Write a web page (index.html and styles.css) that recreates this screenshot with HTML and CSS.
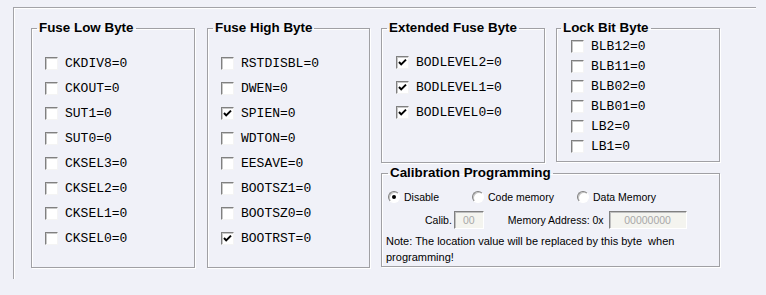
FILE: index.html
```html
<!DOCTYPE html>
<html>
<head>
<meta charset="utf-8">
<link rel="stylesheet" href="styles.css">
</head>
<body>
<div class="frame">
  <fieldset class="group tall w164">
    <legend>Fuse Low Byte</legend>
    <div class="list rows25 pt15">
      <label class="cb"><span class="box"></span>CKDIV8=0</label>
      <label class="cb"><span class="box"></span>CKOUT=0</label>
      <label class="cb"><span class="box"></span>SUT1=0</label>
      <label class="cb"><span class="box"></span>SUT0=0</label>
      <label class="cb"><span class="box"></span>CKSEL3=0</label>
      <label class="cb"><span class="box"></span>CKSEL2=0</label>
      <label class="cb"><span class="box"></span>CKSEL1=0</label>
      <label class="cb"><span class="box"></span>CKSEL0=0</label>
    </div>
  </fieldset>
  <fieldset class="group tall w163">
    <legend>Fuse High Byte</legend>
    <div class="list rows25 pt15">
      <label class="cb"><span class="box"></span>RSTDISBL=0</label>
      <label class="cb"><span class="box"></span>DWEN=0</label>
      <label class="cb"><span class="box checked"><svg viewBox="0 0 11 11" width="11" height="11"><path d="M2 5 L4.2 7.4 L9 2.6" fill="none" stroke="#000" stroke-width="2"/></svg></span>SPIEN=0</label>
      <label class="cb"><span class="box"></span>WDTON=0</label>
      <label class="cb"><span class="box"></span>EESAVE=0</label>
      <label class="cb"><span class="box"></span>BOOTSZ1=0</label>
      <label class="cb"><span class="box"></span>BOOTSZ0=0</label>
      <label class="cb"><span class="box checked"><svg viewBox="0 0 11 11" width="11" height="11"><path d="M2 5 L4.2 7.4 L9 2.6" fill="none" stroke="#000" stroke-width="2"/></svg></span>BOOTRST=0</label>
    </div>
  </fieldset>
  <div class="right">
    <div class="toprow">
      <fieldset class="group w164 h143">
        <legend>Extended Fuse Byte</legend>
        <div class="list rows25 pt14 pl14">
          <label class="cb"><span class="box checked"><svg viewBox="0 0 11 11" width="11" height="11"><path d="M2 5 L4.2 7.4 L9 2.6" fill="none" stroke="#000" stroke-width="2"/></svg></span>BODLEVEL2=0</label>
          <label class="cb"><span class="box checked"><svg viewBox="0 0 11 11" width="11" height="11"><path d="M2 5 L4.2 7.4 L9 2.6" fill="none" stroke="#000" stroke-width="2"/></svg></span>BODLEVEL1=0</label>
          <label class="cb"><span class="box checked"><svg viewBox="0 0 11 11" width="11" height="11"><path d="M2 5 L4.2 7.4 L9 2.6" fill="none" stroke="#000" stroke-width="2"/></svg></span>BODLEVEL0=0</label>
        </div>
      </fieldset>
      <fieldset class="group w164 h142">
        <legend class="lg-lock">Lock Bit Byte</legend>
        <div class="list rows20 pl14">
          <label class="cb"><span class="box"></span>BLB12=0</label>
          <label class="cb"><span class="box"></span>BLB11=0</label>
          <label class="cb"><span class="box"></span>BLB02=0</label>
          <label class="cb"><span class="box"></span>BLB01=0</label>
          <label class="cb"><span class="box"></span>LB2=0</label>
          <label class="cb"><span class="box"></span>LB1=0</label>
        </div>
      </fieldset>
    </div>
    <fieldset class="group cal">
      <legend class="lg-cal">Calibration Programming</legend>
      <div class="radios">
        <label class="rb r1"><span class="dot on"></span>Disable</label>
        <label class="rb r2"><span class="dot"></span>Code memory</label>
        <label class="rb"><span class="dot"></span>Data Memory</label>
      </div>
      <div class="fields">
        <span class="calib">Calib.</span>
        <input class="txt small" value="00" readonly>
        <span class="addr">Memory Address: 0x</span>
        <input class="txt wide" value="00000000" readonly>
      </div>
      <p class="note">Note: The location value will be replaced by this byte&nbsp; when programming!</p>
    </fieldset>
  </div>
</div>
</body>
</html>
```
FILE: styles.css
```css
html, body {
  margin: 0;
  padding: 0;
  background: #f0f1f8;
}
body {
  width: 766px;
  height: 295px;
  overflow: hidden;
  font-family: "Liberation Sans", Arial, sans-serif;
  color: #000;
}
.frame {
  box-sizing: border-box;
  margin: 7px 0 0 13px;
  width: 743px;
  height: 272px;
  border-top: 1px solid #a3a3a8;
  border-left: 1px solid #a3a3a8;
  box-shadow: inset 1px 1px 0 #ffffff;
  padding: 12px 0 0 17px;
  display: flex;
  align-items: flex-start;
  gap: 12px;
}
.group {
  box-sizing: border-box;
  margin: 0;
  padding: 0;
  border: 1px solid #a0a0a4;
  box-shadow: 1px 1px 0 #ffffff, inset 1px 1px 0 #ffffff;
  min-width: 0;
}
.group legend {
  margin-left: 5px;
  padding: 0 2px;
  font-family: "Liberation Sans", Arial, sans-serif;
  font-weight: bold;
  font-size: 13.4px;
  line-height: 16px;
  height: 16px;
}
.group .lg-lock { margin-left: 4px; }
.group .lg-cal { margin-left: 6px; }
.tall { height: 248px; }
.w164 { width: 164px; }
.w163 { width: 163px; }
.h143 { height: 143px; }
.h142 { height: 142px; }
.right {
  display: flex;
  flex-direction: column;
  gap: 2px;
  margin-left: -1px;
}
.toprow {
  display: flex;
  align-items: flex-start;
  gap: 11px;
}
.list {
  display: flex;
  flex-direction: column;
  padding-left: 13px;
}
.pt15 { padding-top: 15px; }
.pt14 { padding-top: 14px; }
.pl14 { padding-left: 14px; }
.rows25 .cb { height: 25px; }
.rows20 .cb { height: 20px; }
.cb {
  display: flex;
  align-items: center;
  gap: 7px;
  font-family: "Liberation Mono", "Courier New", monospace;
  font-size: 13px;
  line-height: 15px;
}
.box {
  box-sizing: border-box;
  flex: none;
  width: 13px;
  height: 13px;
  background: #ffffff;
  border: 1px solid;
  border-color: #808080 #f4f4f4 #f4f4f4 #808080;
  box-shadow: inset 1px 1px 0 #c8c8c8;
  display: flex;
  align-items: center;
  justify-content: center;
}
.box svg { display: block; }
.cal {
  width: 339px;
  height: 102px;
  font-size: 10.5px;
  line-height: 15px;
}
.radios {
  display: flex;
  align-items: center;
  height: 16px;
  margin-top: 8px;
  padding-left: 6px;
}
.rb {
  display: flex;
  align-items: center;
  gap: 4px;
}
.r1 { width: 84px; }
.r2 { width: 105px; }
.dot {
  box-sizing: border-box;
  position: relative;
  width: 12px;
  height: 12px;
  border-radius: 50%;
  background: #ffffff;
  border: 1px solid;
  border-color: #808080 #ffffff #ffffff #808080;
  box-shadow: inset 1px 1px 0 #c4c4c4;
}
.dot.on::after {
  content: "";
  position: absolute;
  left: 3px;
  top: 3px;
  width: 4px;
  height: 4px;
  border-radius: 50%;
  background: #000;
}
.fields {
  display: flex;
  align-items: center;
  height: 18px;
  margin-top: 6px;
  padding-left: 43px;
}
.calib { margin-right: 2px; }
.addr { margin-left: 24px; margin-right: 5px; }
.txt {
  box-sizing: border-box;
  height: 18px;
  padding: 0;
  margin: 0;
  border: 1px solid;
  border-color: #808080 #ffffff #ffffff #808080;
  box-shadow: inset 1px 1px 0 #c0c0c0;
  background: #f4f4ef;
  color: #a8a8a8;
  font-family: "Liberation Sans", Arial, sans-serif;
  font-size: 10.5px;
  text-align: center;
  outline: none;
}
.small { width: 30px; }
.wide { width: 78px; }
.note {
  margin: 5px 0 0 0;
  padding: 0 6px 0 4px;
  font-size: 11px;
  line-height: 15.5px;
}
```
